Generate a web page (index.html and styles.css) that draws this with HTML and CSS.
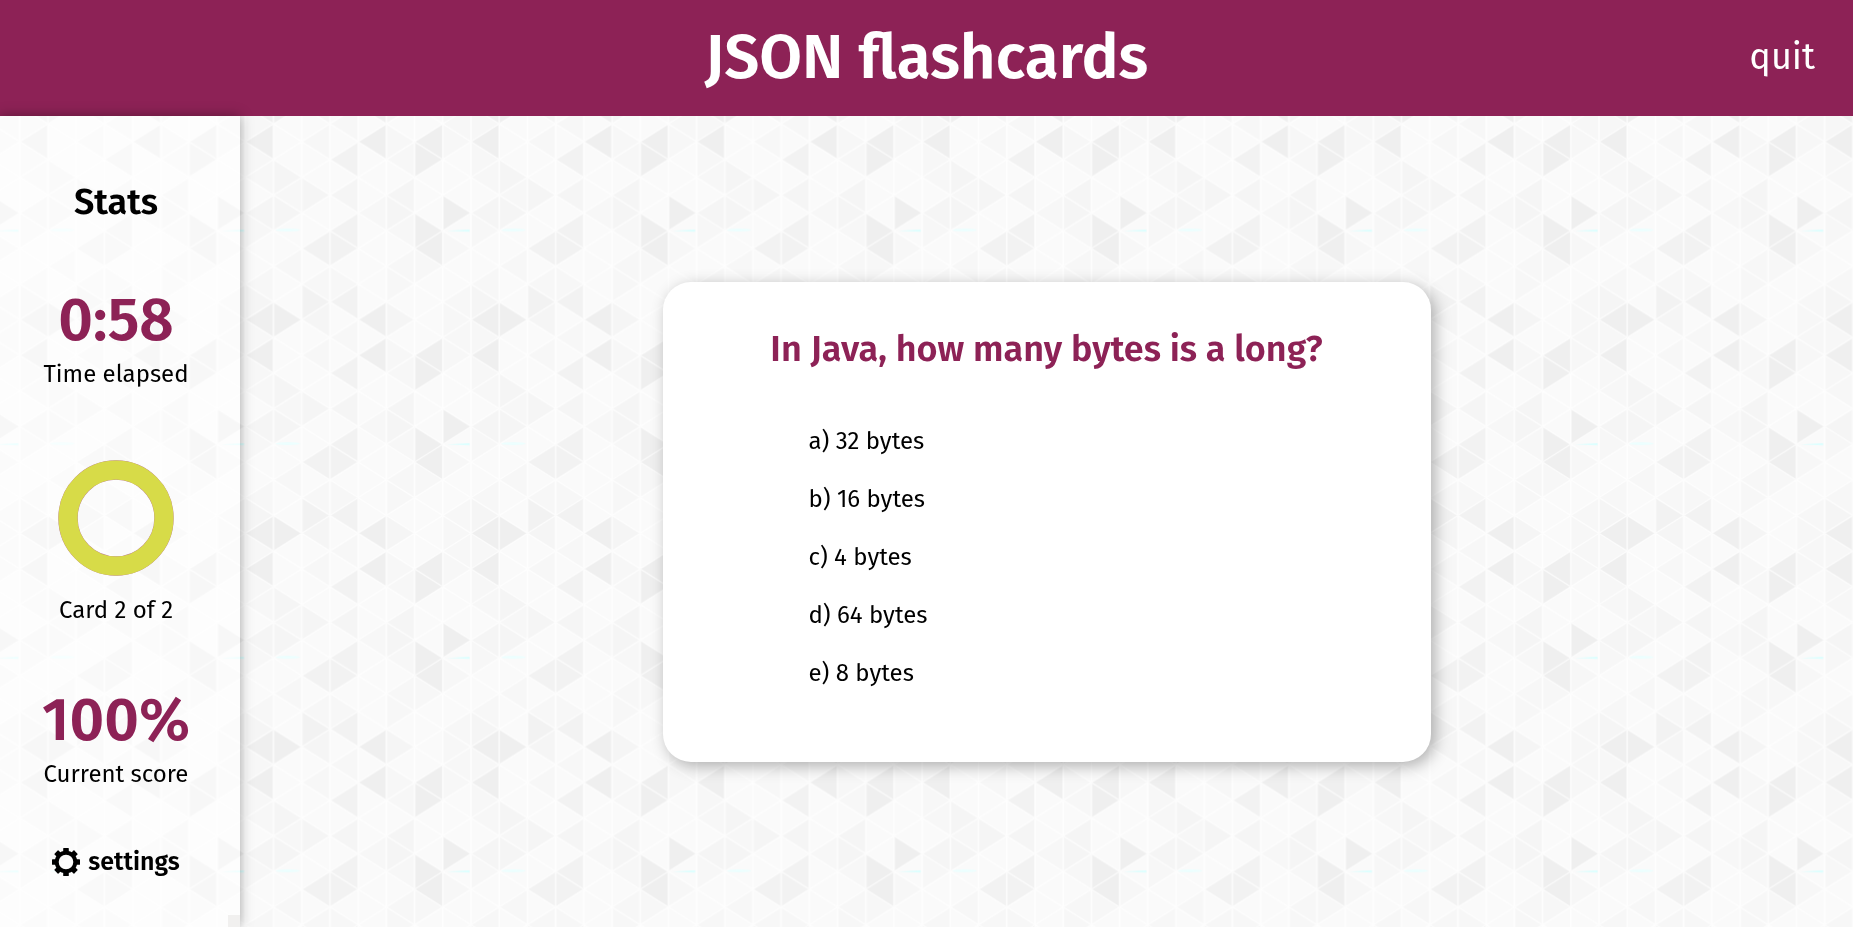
FILE: index.html
```html
<!DOCTYPE html>
<html lang="en">
<head>
<meta charset="utf-8">
<title>JSON flashcards</title>
<link rel="stylesheet" href="styles.css">
</head>
<body>
<svg class="backdrop" aria-hidden="true">
  <defs>
    <!-- One unit is a column wide and half a triangle high. -->
    <pattern id="triangles" width="8" height="12" patternUnits="userSpaceOnUse" patternTransform="translate(19.8 141.7) scale(28.2 17.8)">
      <rect width="8" height="12" fill="#fafafa"/>
      <path fill="#f7f7f7" d="M1 1l-1-1v2zM5 1l1-1v2zM2 0l1-1v2zM2 12l1-1v2zM6 0l-1-1v2zM6 12l-1-1v2zM8 0l-1-1v2zM8 12l-1-1v2zM0 2l1-1v2zM1 3l1-1v2zM4 4l1-1v2zM1 5l-1-1v2zM5 5l1-1v2zM8 6l-1-1v2zM1 7l1-1v2zM5 7l1-1v2zM0 8l1-1v2zM2 8l1-1v2zM6 8l-1-1v2zM7 9l1-1v2zM7 11l1-1v2zM3 11l1-1v2zM1 11l-1-1v2zM8 10l-1-1v2zM4 8l-1-1v2zM7 7l-1-1v2z"/>
      <path fill="#f5f5f5" d="M2 2l-1-1v2zM3 3l-1-1v2zM3 3l1-1v2zM5 3l1-1v2zM0 4l1-1v2zM2 4l-1-1v2zM6 4l-1-1v2zM1 9l-1-1v2zM6 10l-1-1v2zM2 10l1-1v2z"/>
      <path fill="#f2f2f2" d="M3 1l1-1v2zM3 5l1-1v2zM2 6l1-1v2zM4 6l-1-1v2zM3 9l-1-1v2zM3 9l1-1v2z"/>
      <path fill="#efefef" d="M0 0l1-1v2zM0 12l1-1v2zM4 0l1-1v2zM4 12l1-1v2zM6 0l1-1v2zM6 12l1-1v2zM7 1l-1-1v2zM8 4l-1-1v2zM7 5l-1-1v2zM6 6l1-1v2zM0 10l1-1v2zM2 10l-1-1v2zM4 10l1-1v2z"/>
      <ellipse cx="1.5" cy="4.96" rx=".44" ry=".08" fill="#ecffff"/>
      <path fill="#dcffff" d="M7.15 5l.8-.06v.12z"/>
      <path class="backdrop-lines" d="M0 0v12M1 0v12M2 0v12M3 0v12M4 0v12M5 0v12M6 0v12M7 0v12M8 0v12M0 0l8 8M0 8L8 0M0 2l8 8M0 10l8-8M0 4l8 8M0 12l8-8M0 6l6 6M0 6l6-6M2 0l6 6M2 12l6-6M0 8l4 4M0 4l4-4M4 0l4 4M4 12l4-4M0 10l2 2M0 2l2-2M6 0l2 2M6 12l2-2"/>
    </pattern>
  </defs>
  <rect width="100%" height="100%" fill="url(#triangles)"/>
</svg>
<header class="header">
  <h1 class="title">JSON flashcards</h1>
  <a class="quit" href="#quit">quit</a>
</header>
<div class="layout">
  <aside class="sidebar">
    <h2 class="sidebar-title">Stats</h2>
    <section class="stat">
      <p class="stat-value">0:58</p>
      <p class="stat-label">Time elapsed</p>
    </section>
    <section class="stat progress">
      <svg class="ring" viewBox="0 0 116 116" role="img" aria-label="2 of 2 cards">
        <circle cx="58" cy="58" r="48" fill="none" stroke="#8d2256" stroke-opacity=".6" stroke-width="19.4"/>
        <circle cx="58" cy="58" r="48" fill="none" stroke="#d7db48" stroke-width="19"/>
      </svg>
      <p class="stat-label">Card 2 of 2</p>
    </section>
    <section class="stat">
      <p class="stat-value">100%</p>
      <p class="stat-label">Current score</p>
    </section>
    <button class="settings" type="button">
      <svg class="gear" viewBox="-14 -14 28 28" aria-hidden="true">
        <circle r="9.3" fill="none" stroke="#000" stroke-width="4"/>
        <path id="tooth" d="M-2.8-10.5V-13.4Q-2.8-14-2.2-14H2.2Q2.8-14 2.8-13.4V-10.5z"/>
        <use href="#tooth" transform="rotate(45)"/>
        <use href="#tooth" transform="rotate(90)"/>
        <use href="#tooth" transform="rotate(135)"/>
        <use href="#tooth" transform="rotate(180)"/>
        <use href="#tooth" transform="rotate(225)"/>
        <use href="#tooth" transform="rotate(270)"/>
        <use href="#tooth" transform="rotate(315)"/>
      </svg>
      settings
    </button>
    <span class="corner"></span>
  </aside>
  <main class="main">
    <article class="card">
      <h2 class="question">In Java, how many bytes is a long?</h2>
      <ul class="options">
        <li><button class="option" type="button">a) 32 bytes</button></li>
        <li><button class="option" type="button">b) 16 bytes</button></li>
        <li><button class="option" type="button">c) 4 bytes</button></li>
        <li><button class="option" type="button">d) 64 bytes</button></li>
        <li><button class="option" type="button">e) 8 bytes</button></li>
      </ul>
    </article>
  </main>
</div>
</body>
</html>
```
FILE: styles.css
```css
* {
  box-sizing: border-box;
}

body {
  display: flex;
  flex-direction: column;
  min-height: 100vh;
  margin: 0;
  color: #000;
  font-family: "Fira Sans", "Noto Sans", sans-serif;
  font-size: 24px;
  line-height: 32px;
}

h1,
h2,
p,
ul {
  margin: 0;
  padding: 0;
}

button {
  padding: 0;
  border: 0;
  background: none;
  color: inherit;
  font: inherit;
  cursor: pointer;
}

.backdrop {
  position: fixed;
  inset: 0;
  z-index: -1;
  width: 100%;
  height: 100%;
}

.backdrop-lines {
  fill: none;
  stroke: #fff;
  stroke-opacity: 0.7;
  stroke-width: 0.06;
}

.header {
  display: grid;
  grid-template-columns: 1fr auto 1fr;
  align-items: center;
  height: 116px;
  padding: 0 38px 2px;
  background: #8d2256;
  color: #fff;
}

.title {
  grid-column: 2;
  font-size: 62px;
  font-weight: 600;
  line-height: 80px;
}

.quit {
  justify-self: end;
  color: inherit;
  font-size: 36px;
  line-height: 48px;
  text-decoration: none;
}

.layout {
  display: flex;
  flex: 1;
}

.sidebar {
  position: relative;
  display: flex;
  flex-direction: column;
  align-items: center;
  width: 240px;
  padding: 64px 8px 0 0;
  background: rgba(255, 255, 255, 0.5);
  box-shadow: 0 0 12px rgba(0, 0, 0, 0.35);
  text-align: center;
}

.sidebar-title {
  margin-bottom: 60px;
  font-size: 36px;
  font-weight: 600;
  line-height: 44px;
}

.stat {
  margin-bottom: 56px;
}

.stat-value {
  margin-bottom: 2px;
  color: #8d2256;
  font-size: 60px;
  font-weight: 600;
  line-height: 72px;
}

.progress {
  margin-top: 14px;
  margin-bottom: 58px;
}

.ring {
  display: block;
  width: 116px;
  height: 116px;
  margin: 0 auto 18px;
}

.settings {
  display: flex;
  align-items: center;
  gap: 8px;
  font-size: 25px;
  font-weight: 600;
}

.gear {
  width: 28px;
  height: 28px;
}

.corner {
  position: absolute;
  right: 0;
  bottom: 0;
  width: 12px;
  height: 12px;
  background: #f1f0ef;
}

.main {
  display: flex;
  flex: 1;
  align-items: center;
  justify-content: center;
}

.card {
  width: 768px;
  min-height: 480px;
  padding: 43px 48px;
  border-radius: 28px;
  background: #fff;
  box-shadow: 4px 4px 16px rgba(0, 0, 0, 0.3);
}

.question {
  margin-bottom: 39px;
  color: #8d2256;
  font-size: 36px;
  font-weight: 600;
  line-height: 48px;
  text-align: center;
}

.options {
  padding-left: 98px;
  list-style: none;
}

.option {
  display: block;
  height: 58px;
}
```
